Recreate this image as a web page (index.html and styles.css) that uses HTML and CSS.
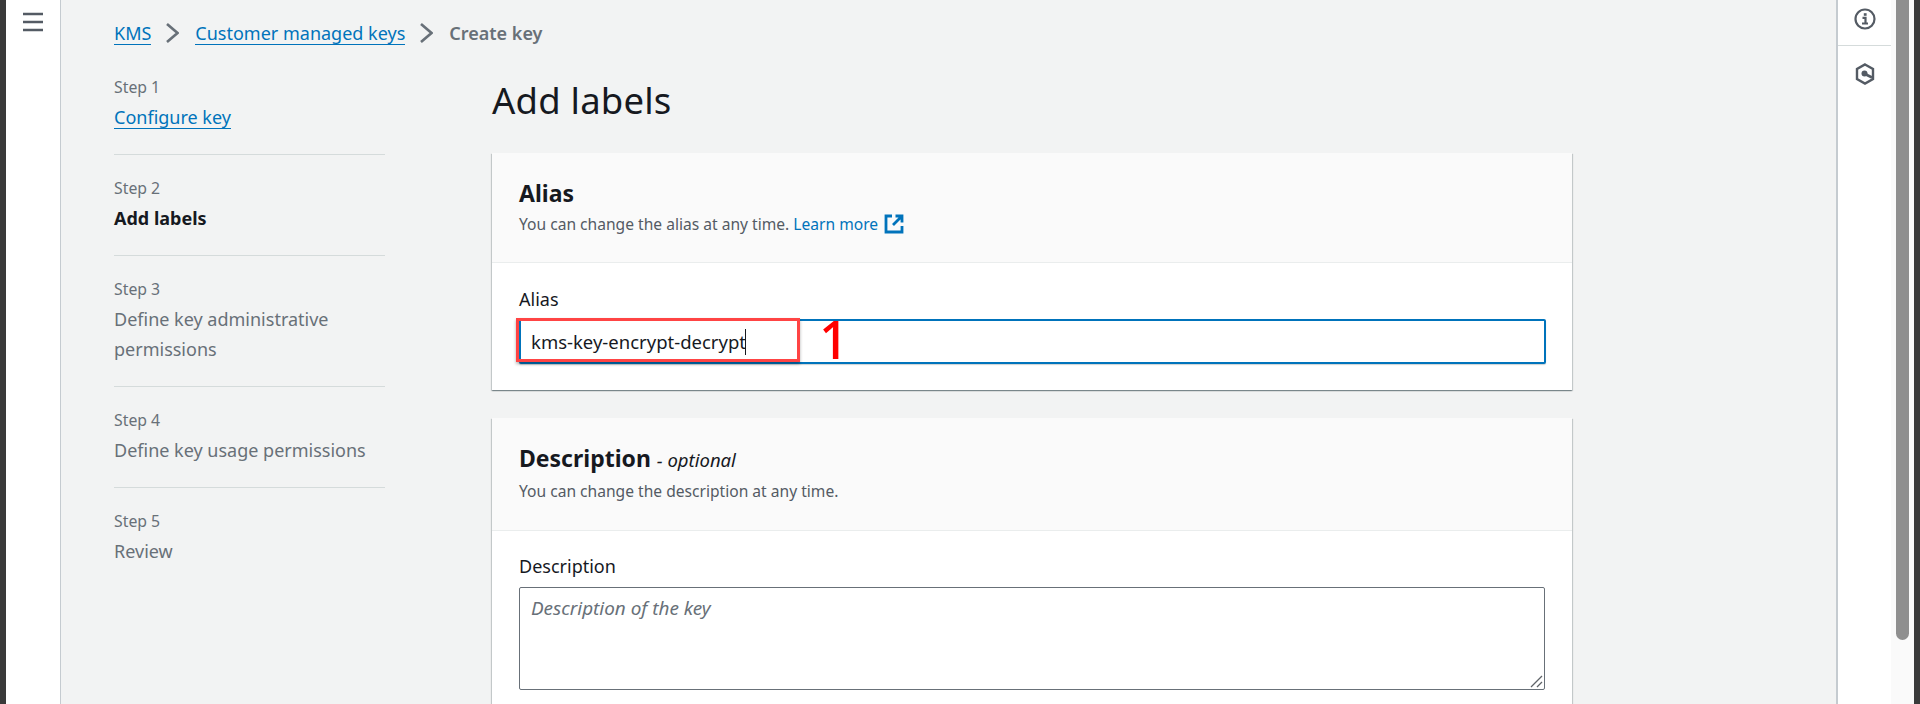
FILE: index.html
```html
<!DOCTYPE html>
<html lang="en">
<head>
<meta charset="utf-8">
<title>Create key</title>
<link rel="stylesheet" href="styles.css">
</head>
<body>
<div class="app">
  <div class="edge"></div>
  <nav class="nav-rail">
    <svg class="menu-icon" width="20" height="20" viewBox="0 0 20 20"><path d="M0 2h20M0 10h20M0 18h20" stroke="#545b64" stroke-width="2.600" fill="none"/></svg>
  </nav>
  <main class="main">
    <div class="crumbs">
      <a class="link">KMS</a>
      <svg class="chev" width="13" height="20" viewBox="0 0 13 20"><path d="M1 1l10.500 9L1 19" stroke="#687078" stroke-width="2.600" fill="none"/></svg>
      <a class="link">Customer managed keys</a>
      <svg class="chev" width="13" height="20" viewBox="0 0 13 20"><path d="M1 1l10.500 9L1 19" stroke="#687078" stroke-width="2.600" fill="none"/></svg>
      <span class="crumb-current">Create key</span>
    </div>
    <div class="columns">
      <ol class="steps">
        <li class="step"><div class="step-no">Step 1</div><a class="link step-name">Configure key</a></li>
        <li class="step"><div class="step-no">Step 2</div><div class="step-name active">Add labels</div></li>
        <li class="step"><div class="step-no">Step 3</div><div class="step-name">Define key administrative permissions</div></li>
        <li class="step"><div class="step-no">Step 4</div><div class="step-name">Define key usage permissions</div></li>
        <li class="step"><div class="step-no">Step 5</div><div class="step-name">Review</div></li>
      </ol>
      <div class="content">
        <h1 class="title">Add labels</h1>
        <section class="card">
          <header class="card-head">
            <h2 class="card-title">Alias</h2>
            <p class="card-desc">You can change the alias at any time. <a class="learn">Learn more</a>
              <svg class="ext" width="20" height="20" viewBox="0 0 20 20"><path d="M8 2H2v16h16v-6M11.500 2H18v6.500M18 2L9 11" stroke="#0073bb" stroke-width="2.800" fill="none"/></svg>
            </p>
          </header>
          <div class="card-body alias-body">
            <div class="label">Alias</div>
            <div class="alias-field">
              <div class="input"><span class="input-text">kms-key-encrypt-decrypt</span><span class="caret"></span></div>
              <div class="mark"></div>
              <span class="mark-no">1</span>
            </div>
          </div>
        </section>
        <section class="card">
          <header class="card-head desc-head">
            <h2 class="card-title">Description <span class="optional">- optional</span></h2>
            <p class="card-desc">You can change the description at any time.</p>
          </header>
          <div class="card-body desc-body">
            <div class="label">Description</div>
            <div class="textarea">
              <span class="placeholder">Description of the key</span>
              <svg class="grip" width="13" height="13" viewBox="0 0 13 13"><path d="M1 12L12 1M7 12l5-5" stroke="#5f6368" stroke-width="1.300" fill="none"/></svg>
            </div>
          </div>
        </section>
      </div>
    </div>
  </main>
  <aside class="tools">
    <div class="tool tool-first">
      <svg width="22" height="22" viewBox="0 0 22 22"><circle cx="11" cy="11" r="9.500" stroke="#545b64" stroke-width="2.200" fill="none"/><path d="M8.500 9.800h3V15M8 15.500h6" stroke="#545b64" stroke-width="2.200" fill="none"/><rect x="9.800" y="5.200" width="2.800" height="2.600" fill="#545b64"/></svg>
    </div>
    <div class="tool tool-second">
      <svg width="20" height="22" viewBox="0 0 20 22"><path d="M10 1.500l8 4.500v10l-8 4.500-8-4.500V6z" stroke="#545b64" stroke-width="2.400" fill="none"/><circle cx="9.500" cy="10.500" r="3" fill="#545b64"/><path d="M10 11l7 3.500" stroke="#545b64" stroke-width="2.600"/></svg>
    </div>
  </aside>
  <div class="scroll"><div class="thumb"></div></div>
  <div class="edge"></div>
</div>
</body>
</html>
```
FILE: styles.css
```css
* { box-sizing: border-box; }
html, body { margin: 0; padding: 0; height: 100%; overflow: hidden; }
body { font-family: "Noto Sans", "Open Sans", sans-serif; color: #16191f; background: #f2f3f3; }
.app { display: flex; height: 704px; }
.edge { width: 6px; background: #3a3a3a; flex: none; }
.nav-rail { width: 55px; flex: none; background: #fff; border-right: 1px solid #c5cbd0; box-shadow: 1px 0 2px rgba(0,0,0,.12); padding: 12px 0 0 17px; }
.menu-icon { display: block; width: 20px; height: 20px; }
.main { flex: 1; padding: 0 0 0 53px; overflow: hidden; background: #f2f3f3; }
.crumbs { display: flex; align-items: center; height: 66px; font-size: 18px; }
.link { color: #0073bb; border-bottom: 1px solid #0073bb; line-height: 22px; }
.chev { margin: 0 16px 0 15px; flex: none; }
.crumb-current { color: #687078; font-weight: 600; }
.columns { display: flex; }
.steps { list-style: none; margin: 0; padding: 0; width: 271px; flex: none; }
.step { border-bottom: 1px solid #d5dbdb; padding: 10px 0 22px; }
.step:first-child { padding-bottom: 25px; }
.step + .step { padding-top: 22px; }
.step:last-child { border-bottom: 0; }
.step-no { font-size: 15.800px; line-height: 22px; color: #687078; }
.step-name { display: block; font-size: 18px; line-height: 30px; margin-top: 4px; color: #687078; }
a.step-name { display: inline-block; color: #0073bb; line-height: 22px; margin-top: 8px; }
.step-name.active { color: #16191f; font-weight: 700; }
.content { width: 1080px; margin-left: 107px; }
.title { font-size: 36.500px; font-weight: 400; line-height: 48px; margin: 0; padding-top: 10px; height: 87px; letter-spacing: .2px; }
.card { background: #fff; box-shadow: 0 1px 1px 0 rgba(0,28,36,.3), 1px 1px 1px 0 rgba(0,28,36,.15), -1px 1px 1px 0 rgba(0,28,36,.15); margin-bottom: 28px; }
.card-head { background: #fafafa; border-bottom: 1px solid #eaeded; padding: 25px 27px 0; height: 110px; }
.desc-head { height: 113px; }
.card-title { font-size: 23px; line-height: 30px; font-weight: 700; margin: 0; }
.optional { font-size: 18.500px; font-style: italic; font-weight: 400; }
.card-desc { font-size: 15.600px; line-height: 22px; color: #545b64; margin: 5px 0 0; display: flex; align-items: center; white-space: pre; }
.learn { color: #0073bb; }
.ext { margin-left: 6px; }
.card-body { padding: 24px 27px 0; height: 180px; }
.desc-body { padding-top: 23px; }
.alias-body { height: 127px; }
.label { font-size: 18px; line-height: 24px; margin-bottom: 8px; }
.desc-body .label { margin-bottom: 9px; }
.alias-field { position: relative; }
.input { height: 45px; width: 1027px; border: 2px solid #0073bb; border-radius: 2px; box-shadow: 0 1px 1px rgba(0,28,36,.2); background: #fff; display: flex; align-items: center; padding-left: 10px; font-size: 18.500px; }
.caret { width: 1px; height: 26px; background: #16191f; margin-left: -1px; }
.mark { position: absolute; left: -3px; top: -1px; width: 284px; height: 44px; border: 3px solid #f44; box-shadow: 0 2px 3px rgba(0,0,0,.3); }
.mark-no { position: absolute; left: 300px; top: -10px; font-size: 52px; font-weight: 500; line-height: 60px; color: #f00; }
.textarea { position: relative; height: 103px; width: 1026px; border: 1px solid #687078; border-radius: 2px; background: #fff; padding: 7px 11px; font-size: 18.900px; }
.placeholder { font-style: italic; color: #687078; }
.grip { position: absolute; right: 1px; bottom: 1px; }
.tools { width: 55px; flex: none; background: #fff; border-left: 2px solid #c5cbd0; }
.tool { height: 46px; display: flex; justify-content: center; align-items: center; }
.tool-first { border-bottom: 1px solid #d5dbdb; padding-bottom: 7px; }
.tool-second { padding-top: 10px; }
.scroll { width: 23px; flex: none; background: #fafafa; padding-left: 5px; }
.thumb { width: 13px; height: 640px; background: #8f8f8f; border-radius: 0 0 7px 7px; }
```
